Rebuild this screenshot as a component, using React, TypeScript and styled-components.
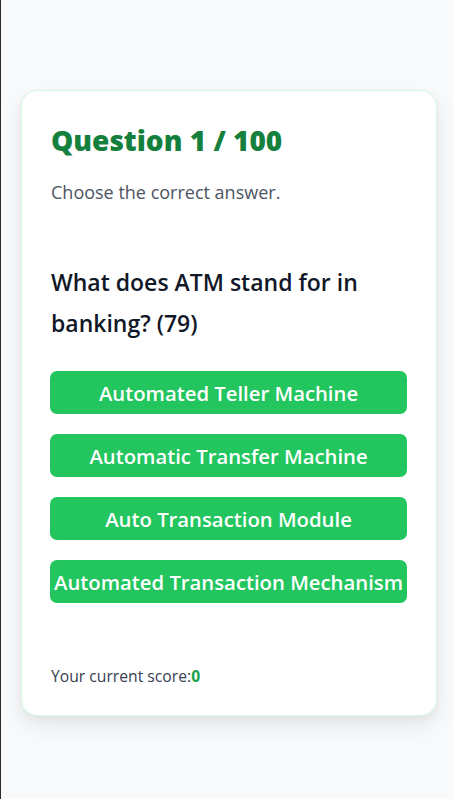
import { createGlobalStyle, styled } from 'styled-components'

const GlobalStyle = createGlobalStyle`
  html, body {
    margin: 0;
    padding: 0;
  }
  body {
    background: #f8fafc;
    font-family: 'Open Sans', 'Noto Sans', sans-serif;
    border-left: 1px solid #2b2b2b;
    min-height: 100vh;
    box-sizing: border-box;
  }
`

const answers = [
  'Automated Teller Machine',
  'Automatic Transfer Machine',
  'Auto Transaction Module',
  'Automated Transaction Mechanism',
]

export default function App() {
  return (
    <>
      <GlobalStyle />
      <Page>
        <Card>
          <Title>Question 1 / 100</Title>
          <Subtitle>Choose the correct answer.</Subtitle>
          <QuestionText>What does ATM stand for in banking? (79)</QuestionText>
          <Answers>
            {answers.map(a => (
              <AnswerButton key={a}>{a}</AnswerButton>
            ))}
          </Answers>
          <Score>
            Your current score:<ScoreValue>0</ScoreValue>
          </Score>
        </Card>
      </Page>
    </>
  )
}

const Page = styled.div`
  padding: 90px 17px 40px 20px;
`

const Card = styled.div`
  width: 416px;
  box-sizing: border-box;
  padding: 29px 29px 27px 28px;
  background: #fff;
  border: 1px solid #d1fadf;
  border-radius: 16px;
  box-shadow: 0 10px 25px rgba(0, 0, 0, 0.08), 0 4px 8px rgba(0, 0, 0, 0.04);
`

const Title = styled.h1`
  margin: 0 0 0 1px;
  color: #15803d;
  font-size: 28px;
  font-weight: 800;
  line-height: 40px;
`

const Subtitle = styled.p`
  margin: 19px 0 0 1px;
  color: #4b5563;
  font-size: 18px;
  line-height: 26px;
`

const QuestionText = styled.h2`
  margin: 57px 0 0 1px;
  color: #111827;
  font-size: 23px;
  font-weight: 600;
  line-height: 41px;
`

const Answers = styled.div`
  margin-top: 27px;
  display: flex;
  flex-direction: column;
  gap: 20px;
`

const AnswerButton = styled.button`
  height: 43px;
  padding: 0;
  border: none;
  border-radius: 7px;
  background: #22c55e;
  color: #fff;
  font-family: 'Open Sans', 'Noto Sans', sans-serif;
  font-size: 20.3px;
  font-weight: 600;
  white-space: nowrap;
  cursor: pointer;
`

const Score = styled.p`
  margin: 61px 0 0 1px;
  color: #374151;
  font-size: 15.7px;
  line-height: 24px;
`

const ScoreValue = styled.span`
  color: #16a34a;
  font-weight: 700;
`
